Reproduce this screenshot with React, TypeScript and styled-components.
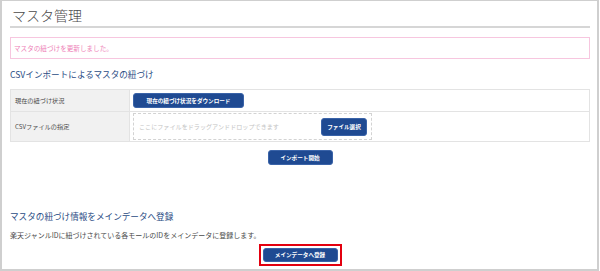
import React from 'react';
import styled, { createGlobalStyle } from 'styled-components';

const GlobalStyle = createGlobalStyle`
  html, body {
    margin: 0;
    padding: 0;
    background: #ffffff;
  }
  body {
    font-family: "Noto Sans CJK JP", "Noto Sans", "Liberation Sans", sans-serif;
    color: #555;
  }
`;

const Frame = styled.div`
  box-sizing: border-box;
  width: 599px;
  height: 271px;
  border: 2px solid #cfcfcf;
  border-top-width: 1px;
  padding: 0 7px 0 8px;
  display: flex;
  flex-direction: column;
`;

const Title = styled.h1`
  margin: 4px 0 0;
  padding: 0 0 0 2px;
  font-size: 14px;
  line-height: 21px;
  font-weight: 300;
  color: #4a4a4a;
  border-bottom: 2px solid #d6d6d6;
`;

const Notice = styled.div`
  margin-top: 9px;
  height: 22px;
  box-sizing: border-box;
  border: 1px solid #f7c6df;
  padding: 0 3px;
  display: flex;
  align-items: center;
  font-size: 6.6px;
  color: #ee7fb7;
`;

const SectionHeading = styled.h2<{ top: number }>`
  margin: ${({ top }) => top}px 0 0;
  font-size: 8.6px;
  line-height: 12px;
  font-weight: 400;
  color: #2a4c84;
`;

const Table = styled.div`
  margin-top: 9px;
  display: grid;
  grid-template-columns: 119px 1fr;
  border: 1px solid #e3e3e3;
  border-bottom: 0;
`;

const LabelCell = styled.div<{ h: number }>`
  box-sizing: border-box;
  height: ${({ h }) => h}px;
  background: #f1f1f1;
  border-bottom: 1px solid #e3e3e3;
  border-right: 1px solid #e3e3e3;
  display: flex;
  align-items: center;
  padding-left: 4px;
  font-size: 6.2px;
  color: #4a4a4a;
`;

const ValueCell = styled.div<{ h: number }>`
  box-sizing: border-box;
  height: ${({ h }) => h}px;
  border-bottom: 1px solid #e3e3e3;
  display: flex;
  align-items: center;
  padding-left: 3px;
`;

const Button = styled.button<{ w: number; h?: number }>`
  box-sizing: border-box;
  width: ${({ w }) => w}px;
  height: ${({ h }) => h ?? 15}px;
  padding: 0;
  border: 1px solid #3a63a8;
  border-radius: 3px;
  background: #1f4a92;
  color: #fff;
  font-family: inherit;
  font-size: 5.6px;
  font-weight: 700;
  white-space: nowrap;
  display: flex;
  align-items: center;
  justify-content: center;
  cursor: pointer;
`;

const DropZone = styled.div`
  box-sizing: border-box;
  width: 239px;
  height: 27px;
  border: 1.5px dashed #d3d3d3;
  display: flex;
  align-items: center;
  justify-content: space-between;
  padding: 0 4px 0 5px;
  font-size: 6.1px;
  color: #c4c4c4;
`;

const CenterRow = styled.div<{ top: number }>`
  margin-top: ${({ top }) => top}px;
  display: flex;
  justify-content: center;
`;

const Description = styled.p`
  margin: 8px 0 0;
  font-size: 7px;
  line-height: 10px;
  color: #4a4a4a;
`;

const Highlight = styled.div`
  padding: 2px;
  border: 2px solid #e3000f;
`;

export default function App() {
  return (
    <>
      <GlobalStyle />
      <Frame>
        <Title>マスタ管理</Title>
        <Notice>マスタの紐づけを更新しました。</Notice>

        <SectionHeading top={9}>CSVインポートによるマスタの紐づけ</SectionHeading>
        <Table>
          <LabelCell h={22}>現在の紐づけ状況</LabelCell>
          <ValueCell h={22}>
            <Button w={111}>現在の紐づけ状況をダウンロード</Button>
          </ValueCell>
          <LabelCell h={30}>CSVファイルの指定</LabelCell>
          <ValueCell h={30}>
            <DropZone>
              ここにファイルをドラッグアンドドロップできます
              <Button w={46} h={18}>ファイル選択</Button>
            </DropZone>
          </ValueCell>
        </Table>
        <CenterRow top={8}>
          <Button w={65}>インポート開始</Button>
        </CenterRow>

        <SectionHeading top={45}>マスタの紐づけ情報をメインデータへ登録</SectionHeading>
        <Description>楽天ジャンルIDに紐づけされている各モールのIDをメインデータに登録します。</Description>
        <CenterRow top={4}>
          <Highlight>
            <Button w={75} h={14}>メインデータへ登録</Button>
          </Highlight>
        </CenterRow>
      </Frame>
    </>
  );
}
